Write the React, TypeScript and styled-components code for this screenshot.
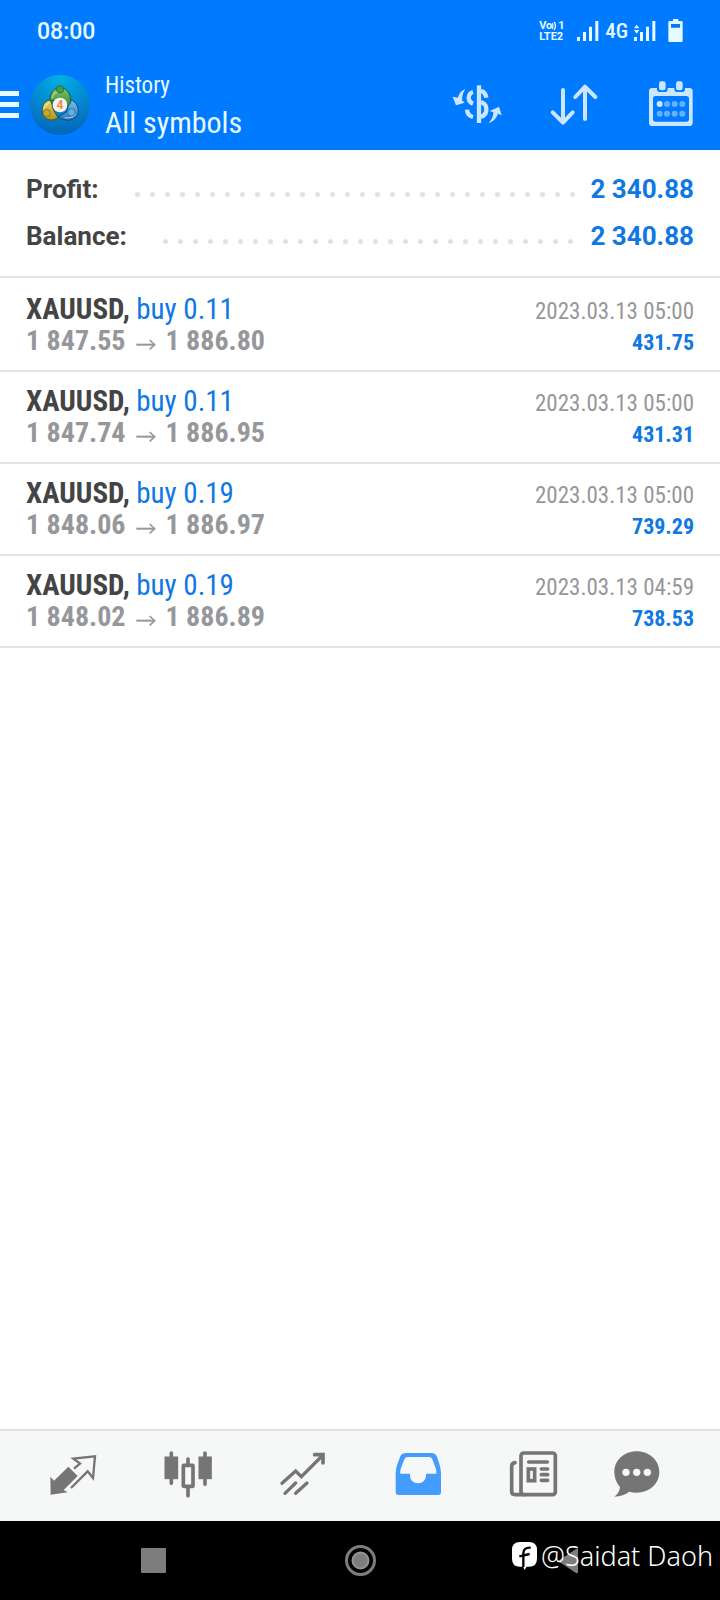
import React from "react";
import styled, { createGlobalStyle } from "styled-components";

const condensed = `"Roboto Condensed", "Liberation Sans Narrow", Roboto, sans-serif`;
const regular = `Roboto, "Liberation Sans", sans-serif`;

const GlobalStyle = createGlobalStyle`
  * { box-sizing: border-box; }
  body { margin: 0; background: #fff; font-family: ${regular}; }
  button { padding: 0; border: 0; background: none; color: inherit; font: inherit; cursor: pointer; }
  svg { display: block; flex: none; }
`;

const Page = styled.div`
  display: flex;
  flex-direction: column;
  min-height: 100vh;
`;

const Header = styled.header`
  background: #007aff;
  color: #e6fbff;
`;

const StatusBar = styled.div`
  display: flex;
  align-items: center;
  justify-content: space-between;
  height: 60px;
  padding: 2px 37px 0;
  font-size: 23px;
  font-weight: 500;
`;

const StatusIcons = styled.div`
  display: flex;
  align-items: center;
  gap: 6px;
  font-family: ${condensed};
  font-size: 21px;
  font-weight: 500;
`;

const Volte = styled.div`
  display: flex;
  flex-direction: column;
  width: 25px;
  margin-right: 7px;
  font: 700 11px/11px ${regular};
`;

const VolteTop = styled.div`
  display: flex;
  align-items: center;
`;

const Battery = styled.svg`
  margin-left: 6px;
`;

const AppBar = styled.div`
  display: flex;
  align-items: center;
  height: 90px;
  padding-right: 24px;
  border-bottom: 1px solid #1a6fcc;
`;

const MenuButton = styled.button`
  display: flex;
  flex-direction: column;
  gap: 6px;
  width: 19px;
  margin-right: 11px;
`;

const MenuBar = styled.span`
  height: 5px;
  background: #e6fbff;
`;

const Titles = styled.div`
  flex: 1;
  margin-left: 15px;
  font-family: ${condensed};
`;

const Kicker = styled.div`
  font-size: 23px;
  line-height: 36px;
`;

const Title = styled.h1`
  margin: 0;
  font-size: 30px;
  line-height: 38px;
  font-weight: 400;
`;

const Actions = styled.div`
  display: flex;
  gap: 47px;
  color: #cce6ff;
`;

const Main = styled.main`
  flex: 1;
`;

const Summary = styled.dl`
  margin: 0;
  padding: 15px 26px 17px;
  border-bottom: 2px solid #e4e4e4;
`;

const SummaryRow = styled.div`
  display: flex;
  align-items: center;
  height: 47px;
  font-size: 26px;
  font-weight: 700;
`;

const SummaryLabel = styled.dt`
  color: #444;
`;

const Leader = styled.span`
  flex: 1;
  height: 5px;
  margin: 12px 11px 0 31px;
  background: radial-gradient(circle, #e2e2e2 2px, transparent 3px) left center / 15px 5px repeat-x;
`;

const SummaryValue = styled.dd`
  margin: 0;
  color: #0f78e4;
`;

const Deals = styled.ul`
  margin: 0;
  padding: 2px 0 0;
  list-style: none;
  font-family: ${condensed};
`;

const Deal = styled.li`
  padding: 13px 26px;
  border-bottom: 2px solid #e4e4e4;
`;

const DealLine = styled.div`
  display: flex;
  align-items: baseline;
  justify-content: space-between;
  height: 32px;
  font-size: 28px;
  line-height: 32px;
`;

const Symbol = styled.strong`
  color: #444;
  font-size: 29px;
  font-weight: 700;
`;

const Side = styled.span`
  color: #0f78e4;
  font-size: 29px;
`;

const Prices = styled.span`
  color: #96979b;
  font-weight: 700;
`;

const Arrow = styled.span`
  display: inline-block;
  width: 20px;
  margin: 0 10px;

  svg { width: 20px; height: 11px; }
`;

const Time = styled.time`
  color: #96979b;
  font-size: 23px;
`;

const Result = styled.span`
  color: #0f78e4;
  font-size: 22px;
  font-weight: 700;
`;

const TabBar = styled.nav`
  display: flex;
  height: 92px;
  padding: 0 15px;
  border-top: 2px solid #e2e2e2;
  background: #f6f7f7;
`;

const Tab = styled.button<{ $active?: boolean }>`
  display: flex;
  flex: 1;
  align-items: center;
  justify-content: center;
  color: ${(p) => (p.$active ? "#449cff" : "#757575")};
`;

const SystemBar = styled.nav`
  position: relative;
  display: flex;
  height: 79px;
  padding: 0 50px;
  background: #000;
  color: #7d7d7d;
`;

const SystemButton = styled.button`
  display: flex;
  flex: 1;
  align-items: center;
  justify-content: center;
`;

const Watermark = styled.div`
  position: absolute;
  right: 7px;
  top: 16px;
  display: flex;
  align-items: center;
  gap: 4px;
  color: #fff;
  font: 300 27px/38px "Noto Sans", sans-serif;
`;

const Signal = ({ data = false }: { data?: boolean }) => (
  <svg width="22" height="20" viewBox="0 0 66 60" fill="currentColor">
    <path d="M0 48h9v12H0zM18 33h9v27h-9zM36 17h9v43h-9zM55 0h9v60h-9z" />
    {data && <path d="M0 22L8 11l8 11zM0 27h16l-8 11z" />}
  </svg>
);

const Logo = () => (
  <svg width="60" height="60" viewBox="0 0 180 180">
    <defs>
      <radialGradient id="sky" cx="50%" cy="5%" r="95%">
        <stop offset="0" stopColor="#02b0e6" />
        <stop offset=".55" stopColor="#0488cf" />
        <stop offset="1" stopColor="#0366b8" />
      </radialGradient>
      <linearGradient id="green" x2="0" y2="1"><stop stopColor="#86c66a" /><stop offset="1" stopColor="#2f8538" /></linearGradient>
      <linearGradient id="gold" x2="0" y2="1"><stop stopColor="#e8dc68" /><stop offset="1" stopColor="#a99422" /></linearGradient>
      <linearGradient id="blue" x2="0" y2="1"><stop stopColor="#7cc4ee" /><stop offset="1" stopColor="#2478be" /></linearGradient>
    </defs>
    <circle cx="90" cy="90" r="90" fill="url(#sky)" />
    <path d="M62 74C38 78 32 102 40 122c10 16 30 16 44 6L70 104z" fill="url(#gold)" stroke="#4b5520" strokeWidth="3" />
    <path d="M120 74c22 6 30 28 22 48-10 16-38 18-58 4l26-16z" fill="url(#blue)" stroke="#134a7d" strokeWidth="3" />
    <path d="M60 78C58 54 72 38 90 38s34 16 32 46l-14 12-10-22z" fill="url(#green)" stroke="#1f5a2b" strokeWidth="3" />
    <path d="M66 70c4-14 12-20 22-20M42 112c-2-12 4-22 14-28M104 128c14 2 26-2 32-12" fill="none" stroke="#fff" strokeOpacity=".5" strokeWidth="4" />
    <circle cx="90" cy="43" r="11" fill="#4b9d45" stroke="#1f5a2b" strokeWidth="2" />
    <circle cx="50" cy="114" r="11" fill="#c2aa33" stroke="#6e6018" strokeWidth="2" />
    <circle cx="124" cy="112" r="11" fill="#62b3ea" stroke="#1e5f9c" strokeWidth="2" />
    <circle cx="90" cy="90" r="22" fill="#f5f3f0" />
    <text x="90" y="103" textAnchor="middle" fontFamily="Roboto, sans-serif" fontWeight="700" fontSize="36" fill="#ee8a45">4</text>
  </svg>
);

type Item = { symbol: string; side: string; open: string; close: string; time: string; result: string };

const deals: Item[] = [
  { symbol: "XAUUSD", side: "buy 0.11", open: "1 847.55", close: "1 886.80", time: "2023.03.13 05:00", result: "431.75" },
  { symbol: "XAUUSD", side: "buy 0.11", open: "1 847.74", close: "1 886.95", time: "2023.03.13 05:00", result: "431.31" },
  { symbol: "XAUUSD", side: "buy 0.19", open: "1 848.06", close: "1 886.97", time: "2023.03.13 05:00", result: "739.29" },
  { symbol: "XAUUSD", side: "buy 0.19", open: "1 848.02", close: "1 886.89", time: "2023.03.13 04:59", result: "738.53" },
];

const totals = [
  ["Profit:", "2 340.88"],
  ["Balance:", "2 340.88"],
];

export default function App() {
  return (
    <Page>
      <GlobalStyle />
      <Header>
        <StatusBar>
          <span>08:00</span>
          <StatusIcons>
            <Volte>
              <VolteTop>
                <span>Vo</span>
                <svg width="6" height="10" viewBox="0 0 6 10" fill="none" stroke="currentColor" strokeWidth="1.3">
                  <path d="M0 2q2 3 0 6M2 1q3 4 0 8" />
                </svg>
                <span>1</span>
              </VolteTop>
              <span>LTE2</span>
            </Volte>
            <Signal />
            <span>4G</span>
            <Signal data />
            <Battery width="15" height="24" viewBox="714 54 45 72" fill="currentColor">
              <path d="M729 54h16v6h9q4 0 4 4v55q0 4-4 4h-35q-4 0-4-4V64q0-4 4-4h10zM723 69v11h27V69z" fillRule="evenodd" />
            </Battery>
          </StatusIcons>
        </StatusBar>
        <AppBar>
          <MenuButton aria-label="Menu">
            <MenuBar />
            <MenuBar />
            <MenuBar />
          </MenuButton>
          <Logo />
          <Titles>
            <Kicker>History</Kicker>
            <Title>All symbols</Title>
          </Titles>
          <Actions>
            <button aria-label="Symbols">
              <svg width="50" height="50" viewBox="66 240 150 150" fill="none" stroke="currentColor" strokeWidth="13">
                <path d="M147 256v113" strokeLinecap="butt" strokeWidth="13" />
                <path d="M129 276Q116 280 116 295Q117 306 129 311M111 329Q112 347 129 351M153 272Q167 277 169 293M153 306Q171 312 169 332Q167 346 153 351" />
                <path d="M106 267Q88 274 84 293L68 290L78 316L104 308L96 301Q96 282 106 267zM176 369Q190 354 190 337L179 333L207 320L215 346L204 341Q197 362 176 369z" fill="currentColor" stroke="none" />
              </svg>
            </button>
            <button aria-label="Sort">
              <svg width="50" height="50" viewBox="357 240 150 150" fill="none" stroke="currentColor" strokeWidth="12" strokeLinecap="round" strokeLinejoin="round">
                <path d="M399 270v97M368 337l31 31 29-31M465 357v-97M436 291l29-31 31 31" />
              </svg>
            </button>
            <button aria-label="Select period">
              <svg width="50" height="50" viewBox="648 240 150 150" fill="currentColor">
                <path d="M667 264h14v2q0 10 10 10h12q10 0 10-10v-2h20v2q0 10 10 10h12q10 0 10-10v-2h13q10 0 10 10v94q0 10-10 10H667q-10 0-10-10v-94q0-10 10-10zM677 288q-8 0-8 8v61q0 8 8 8h92q8 0 8-8v-61q0-8-8-8z" fillRule="evenodd" />
                <rect x="687" y="244" width="20" height="27" rx="7" />
                <rect x="738" y="244" width="20" height="27" rx="7" />
                <circle cx="689" cy="312" r="9" />
                <g opacity=".5">
                  <circle cx="711" cy="312" r="9" /><circle cx="734" cy="312" r="9" /><circle cx="757" cy="312" r="9" />
                  <circle cx="689" cy="341" r="9" /><circle cx="711" cy="341" r="9" /><circle cx="734" cy="341" r="9" /><circle cx="757" cy="341" r="9" />
                </g>
              </svg>
            </button>
          </Actions>
        </AppBar>
      </Header>
      <Main>
        <Summary>
          {totals.map(([label, value]) => (
            <SummaryRow key={label}>
              <SummaryLabel>{label}</SummaryLabel>
              <Leader />
              <SummaryValue>{value}</SummaryValue>
            </SummaryRow>
          ))}
        </Summary>
        <Deals>
          {deals.map((d) => (
            <Deal key={d.open}>
              <DealLine>
                <span>
                  <Symbol>{d.symbol},</Symbol> <Side>{d.side}</Side>
                </span>
                <Time>{d.time}</Time>
              </DealLine>
              <DealLine>
                <Prices>
                  {d.open}
                  <Arrow>
                    <svg viewBox="0 0 60 33" fill="none" stroke="currentColor" strokeWidth="6">
                      <path d="M1 17h54" />
                      <path d="M41 3L56 17L41 31" strokeWidth="5" />
                    </svg>
                  </Arrow>
                  {d.close}
                </Prices>
                <Result>{d.result}</Result>
              </DealLine>
            </Deal>
          ))}
        </Deals>
      </Main>
      <TabBar>
        <Tab aria-label="Quotes">
          <svg width="80" height="60" viewBox="98 78 240 180" fill="none" stroke="currentColor" strokeWidth="7">
            <path d="M150 170L161 182L204 140L232 168L190 210L202 217L151 224z" fill="currentColor" stroke="none" />
            <path d="M221 146L239 131L219 116L284 109L278 174L262 154L212 204" />
          </svg>
        </Tab>
        <Tab aria-label="Charts">
          <svg width="80" height="60" viewBox="442 78 240 180" fill="none" stroke="currentColor" strokeWidth="11" strokeLinecap="round">
            <path d="M512 99v91M613 99v94M562 117v14M562 204v23" />
            <rect x="497" y="115" width="30" height="57" fill="currentColor" />
            <rect x="599" y="115" width="29" height="57" fill="currentColor" />
            <rect x="548" y="136" width="29" height="63" rx="1" />
          </svg>
        </Tab>
        <Tab aria-label="Trade">
          <svg width="80" height="60" viewBox="788 78 240 180" fill="none" stroke="currentColor" strokeWidth="10" strokeLinecap="round">
            <path d="M845 190L886 153L903 170L965 108M854 220L886 189M886 220L920 189" />
            <path d="M943 104h25v25" strokeWidth="11" />
          </svg>
        </Tab>
        <Tab aria-label="History" $active>
          <svg width="80" height="60" viewBox="52 78 240 180" fill="currentColor">
            <path fillRule="evenodd" d="M136 99h76q11 0 16 9l9 26q4 14 4 28v54q0 9-9 9H114q-9 0-9-9v-54q0-14 4-26l10-27q5-10 17-10zM142 111q-8 0-11 7l-11 29q-2 7-1 14h29v6q2 22 24 23q22-1 24-23v-6h31q1-7-1-14l-11-29q-3-7-10-7z" />
          </svg>
        </Tab>
        <Tab aria-label="News">
          <svg width="80" height="60" viewBox="398 78 240 180" fill="none" stroke="currentColor" strokeWidth="11" strokeLinecap="round">
            <rect x="482" y="99" width="103" height="125" rx="8" />
            <path d="M464 128q-10 1-10 12v74q0 10 10 10h26M505 126h56M543 147h19M543 164h19M543 181h19" />
            <rect x="504" y="147" width="19" height="35" />
          </svg>
        </Tab>
        <Tab aria-label="Messages">
          <svg width="80" height="60" viewBox="742 78 240 180" fill="currentColor">
            <path d="M828 94c38 0 68 27 68 62s-30 62-68 62q-13 0-22-3q-18 13-45 15q16-12 17-29q-17-19-17-45c0-35 29-62 67-62z" />
            <g fill="#f6f7f7"><circle cx="796" cy="157" r="11" /><circle cx="828" cy="157" r="11" /><circle cx="860" cy="157" r="11" /></g>
          </svg>
        </Tab>
      </TabBar>
      <SystemBar>
        <SystemButton aria-label="Recent apps">
          <svg width="25" height="25"><rect width="25" height="25" rx="1" fill="currentColor" /></svg>
        </SystemButton>
        <SystemButton aria-label="Home">
          <svg width="31" height="31" fill="none" stroke="currentColor">
            <circle cx="15.5" cy="15.5" r="14" strokeWidth="3" />
            <circle cx="15.5" cy="15.5" r="8" fill="#7d7d7d" stroke="#959595" strokeWidth="2" />
          </svg>
        </SystemButton>
        <SystemButton aria-label="Back">
          <svg width="24" height="26" fill="currentColor"><path d="M3 13L21 1q2-1 2 1v22q0 2-2 1z" /></svg>
        </SystemButton>
        <Watermark>
          <svg width="25" height="28" viewBox="0 0 75 84">
            <path fill="#fff" d="M24 0h27q24 0 24 24v26q0 24-24 24H44L37 84L34 74H24Q0 74 0 50V24Q0 0 24 0z" />
            <path d="M34 75V34q0-18 22-17M22 43l31-7" fill="none" stroke="#000" strokeWidth="7" />
          </svg>
          <span>@Saidat Daoh</span>
        </Watermark>
      </SystemBar>
    </Page>
  );
}
